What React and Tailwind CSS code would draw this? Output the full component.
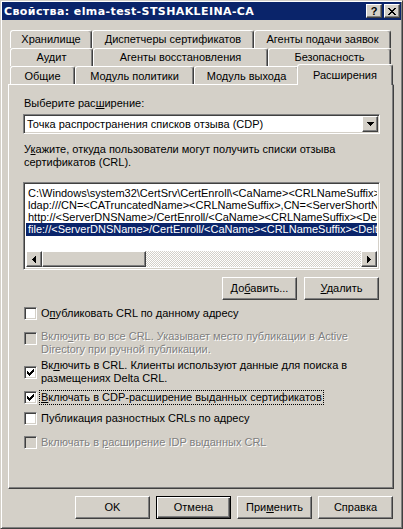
import React from "react";

// classic 3D bevels
const raised =
  "bg-[#d4d0c8] border border-t-white border-l-white border-r-[#404040] border-b-[#404040] shadow-[inset_-1px_-1px_#808080]";
const sunken =
  "border border-t-[#808080] border-l-[#808080] border-r-white border-b-white shadow-[inset_1px_1px_#404040,inset_-1px_-1px_#d4d0c8]";

function Tab({ label, className = "" }) {
  return (
    <div
      className={`h-[18px] shrink-0 bg-[#d4d0c8] border-l border-t border-r border-l-white border-t-white border-r-[#404040] shadow-[inset_-1px_0_#808080] rounded-t-[3px] flex items-center justify-center whitespace-nowrap ${className}`}
    >
      {label}
    </div>
  );
}

function Check({ checked, disabled }) {
  return (
    <div
      className={`w-[13px] h-[13px] shrink-0 flex items-center justify-center ${sunken} ${
        disabled ? "bg-[#d4d0c8]" : "bg-white"
      }`}
    >
      {checked && (
        <svg width="7" height="7" viewBox="0 0 7 7" shapeRendering="crispEdges">
          <path
            d="M6 0h1v1H6zM5 1h2v1H5zM0 2h1v1H0zM4 2h3v1H4zM0 3h2v1H0zM3 3h3v1H3zM0 4h5v1H0zM1 5h3v1H1zM2 6h1v1H2z"
            fill="#000"
          />
        </svg>
      )}
    </div>
  );
}

function Button({ children, isDefault }) {
  if (isDefault) {
    return (
      <div className="w-[75px] h-[23px] border border-black bg-[#d4d0c8] shadow-[inset_1px_1px_#fff,inset_-1px_-1px_#404040,inset_-2px_-2px_#808080] flex items-center justify-center">
        {children}
      </div>
    );
  }
  return (
    <div className={`w-[75px] h-[23px] ${raised} flex items-center justify-center`}>
      {children}
    </div>
  );
}

const disabledText = "text-[#808080] [text-shadow:1px_1px_0_#fff]";

export default function App() {
  const items = [
    "C:\\Windows\\system32\\CertSrv\\CertEnroll\\<CaName><CRLNameSuffix><DeltaCRLAllowed>.crl",
    "ldap:///CN=<CATruncatedName><CRLNameSuffix>,CN=<ServerShortName>,CN=CDP,CN=Public Key Services",
    "http://<ServerDNSName>/CertEnroll/<CaName><CRLNameSuffix><DeltaCRLAllowed>.crl",
    "file://<ServerDNSName>/CertEnroll/<CaName><CRLNameSuffix><DeltaCRLAllowed>.crl",
  ];

  return (
    <div className="w-[403px] h-[529px] bg-[#d4d0c8] border border-t-[#d4d0c8] border-l-[#d4d0c8] border-r-[#404040] border-b-[#404040] shadow-[inset_1px_1px_#fff,inset_-1px_-1px_#808080] p-[1px] flex flex-col font-['Liberation_Sans',Arial,sans-serif] text-[11px] leading-[13px] text-black overflow-hidden">
      {/* Title bar */}
      <div className="h-[18px] bg-[#0a246a] flex items-center justify-between pl-[2px] pr-[1px]">
        <span className="text-white font-bold text-[11px] tracking-[0.4px] whitespace-nowrap font-['DejaVu_Sans',sans-serif]">
          Свойства: elma-test-STSHAKLEINA-CA
        </span>
        <div className="flex gap-[2px]">
          <div className={`w-[16px] h-[14px] ${raised} flex items-center justify-center font-bold text-[11px] leading-none`}>
            ?
          </div>
          <div className={`w-[16px] h-[14px] ${raised} flex items-center justify-center`}>
            <svg width="8" height="7" viewBox="0 0 8 7" shapeRendering="crispEdges">
              <path
                d="M0 0h2v1H0zM6 0h2v1H6zM1 1h2v1H1zM5 1h2v1H5zM2 2h4v1H2zM3 3h2v1H3zM2 4h4v1H2zM1 5h2v1H1zM5 5h2v1H5zM0 6h2v1H0zM6 6h2v1H6z"
                fill="#000"
              />
            </svg>
          </div>
        </div>
      </div>

      {/* Tabs */}
      <div className="mt-[10px] ml-[6px] w-[386px] pl-[2px]">
        <div className="flex h-[18px]">
          <Tab label="Хранилище" className="w-[82px]" />
          <Tab label="Диспетчеры сертификатов" className="w-[162px]" />
          <Tab label="Агенты подачи заявок" className="w-[137px]" />
        </div>
        <div className="flex h-[18px]">
          <Tab label="Аудит" className="w-[83px]" />
          <Tab label="Агенты восстановления" className="w-[175px]" />
          <Tab label="Безопасность" className="w-[123px]" />
        </div>
        <div className="flex h-[18px] items-start">
          <Tab label="Общие" className="w-[65px] pt-[2px]" />
          <Tab label="Модуль политики" className="w-[119px] pt-[2px]" />
          <Tab label="Модуль выхода" className="w-[105px] pt-[2px]" />
          <div className="relative z-10 -mt-[2px] -ml-[2px] w-[96px] h-[21px] shrink-0 bg-[#d4d0c8] border-l border-t border-r border-l-white border-t-white border-r-[#404040] shadow-[inset_-1px_0_#808080] rounded-t-[3px] flex items-center justify-center">
            Расширения
          </div>
        </div>
      </div>

      {/* Tab page */}
      <div className="ml-[6px] w-[386px] h-[405px] border border-t-white border-l-white border-r-[#404040] border-b-[#404040] shadow-[inset_-1px_-1px_#808080] pl-[14px] pr-[13px] pt-[12px] flex flex-col">
        <div className="pl-[1px]">
          Выберите рас<u>ш</u>ирение:
        </div>

        <div className={`mt-[4px] h-[20px] bg-white ${sunken} flex items-center justify-between pl-[3px] pr-[1px]`}>
          <span className="whitespace-nowrap">Точка распространения списков отзыва (CDP)</span>
          <div className={`w-[16px] h-[16px] ${raised} flex items-center justify-center`}>
            <svg width="7" height="4" viewBox="0 0 7 4" shapeRendering="crispEdges">
              <path d="M0 0h7v1H0zM1 1h5v1H1zM2 2h3v1H2zM3 3h1v1H3z" fill="#000" />
            </svg>
          </div>
        </div>

        <div className="mt-[9px] pl-[1px]">
          У<u>к</u>ажите, откуда пользователи могут получить списки отзыва
          <br />
          сертификатов (CRL).
        </div>

        {/* URL list */}
        <div className={`mt-[13px] h-[88px] bg-white ${sunken} flex flex-col p-[2px]`}>
          <div className="flex-1 overflow-hidden pt-[2px]">
            {items.map((item, i) => (
              <div
                key={i}
                className={`h-[12px] leading-[12px] pl-[2px] whitespace-nowrap ${
                  i === 3 ? "bg-[#0a246a] text-white h-[13px] leading-[13px]" : ""
                }`}
              >
                {item}
              </div>
            ))}
          </div>
          <div className="h-[16px] flex">
            <div className={`w-[16px] h-[16px] ${raised} flex items-center justify-center`}>
              <svg width="4" height="7" viewBox="0 0 4 7" shapeRendering="crispEdges">
                <path d="M3 0h1v7H3zM2 1h1v5H2zM1 2h1v3H1zM0 3h1v1H0z" fill="#000" />
              </svg>
            </div>
            <div className={`w-[104px] h-[16px] ${raised}`} />
            <div className="flex-1 h-[16px] bg-[repeating-conic-gradient(#fff_0%_25%,#d4d0c8_0%_50%)] bg-[length:2px_2px]" />
            <div className={`w-[16px] h-[16px] ${raised} flex items-center justify-center`}>
              <svg width="4" height="7" viewBox="0 0 4 7" shapeRendering="crispEdges">
                <path d="M0 0h1v7H0zM1 1h1v5H1zM2 2h1v3H2zM3 3h1v1H3z" fill="#000" />
              </svg>
            </div>
          </div>
        </div>

        <div className="mt-[7px] flex justify-end gap-[7px] pr-[1px]">
          <Button>
            <span>
              До<u>б</u>авить...
            </span>
          </Button>
          <Button>
            <span>
              <u>У</u>далить
            </span>
          </Button>
        </div>

        {/* Options */}
        <div className="mt-[7px] ml-[1px] flex items-center gap-[4px]">
          <Check />
          <span>
            О<u>п</u>убликовать CRL по данному адресу
          </span>
        </div>

        <div className="mt-[10px] ml-[1px] flex items-start gap-[4px]">
          <div className="mt-[2px]">
            <Check disabled />
          </div>
          <span className={disabledText}>
            Вклю<u>ч</u>ить во все CRL. Указывает место публикации в Active
            <br />
            Directory при ручной публикации.
          </span>
        </div>

        <div className="mt-[3px] ml-[1px] flex items-center gap-[4px]">
          <Check checked />
          <span>
            Вк<u>л</u>ючить в CRL. Клиенты используют данные для поиска в
            <br />
            размещениях Delta CRL.
          </span>
        </div>

        <div className="mt-[6px] ml-[1px] flex items-center gap-[3px]">
          <Check checked />
          <span className="outline outline-1 outline-dotted outline-black px-[1px]">
            <u>В</u>ключать в CDP-расширение выданных сертификатов
          </span>
        </div>

        <div className="mt-[8px] ml-[1px] flex items-center gap-[4px]">
          <Check />
          <span>Публикация разностных CRLs по адресу</span>
        </div>

        <div className="mt-[11px] ml-[1px] flex items-center gap-[4px]">
          <Check disabled />
          <span className={disabledText}>
            Включать в <u>р</u>асширение IDP выданных CRL
          </span>
        </div>
      </div>

      {/* Dialog buttons */}
      <div className="mt-[7px] flex justify-end gap-[6px] pr-[8px]">
        <Button>OK</Button>
        <Button isDefault>Отмена</Button>
        <Button>
          <span>
            При<u>м</u>енить
          </span>
        </Button>
        <Button>Справка</Button>
      </div>
    </div>
  );
}
